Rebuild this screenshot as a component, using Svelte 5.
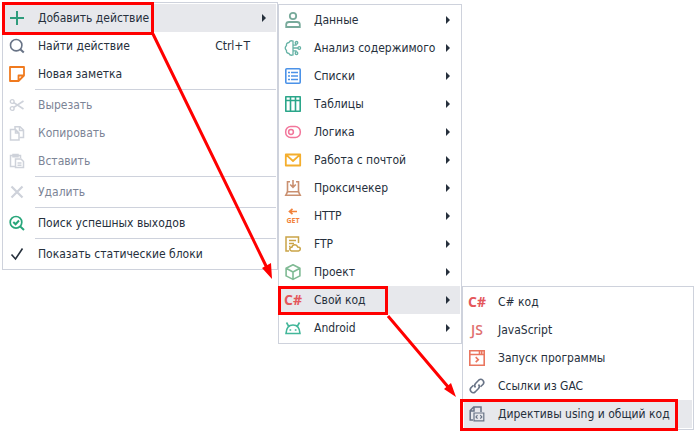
<script lang="ts">
  type Item = {
    icon: string;
    label: string;
    shortcut?: string;
    arrow?: boolean;
    active?: boolean;
    disabled?: boolean;
    line?: boolean;
  };

  const actions: Item[] = [
    { icon: 'plus', label: 'Добавить действие', arrow: true, active: true },
    { icon: 'search', label: 'Найти действие', shortcut: 'Ctrl+T' },
    { icon: 'note', label: 'Новая заметка', line: true },
    { icon: 'cut', label: 'Вырезать', disabled: true },
    { icon: 'copy', label: 'Копировать', disabled: true },
    { icon: 'paste', label: 'Вставить', disabled: true, line: true },
    { icon: 'remove', label: 'Удалить', disabled: true, line: true },
    { icon: 'exits', label: 'Поиск успешных выходов', line: true },
    { icon: 'check', label: 'Показать статические блоки' }
  ];

  const groups: Item[] = [
    { icon: 'user', label: 'Данные', arrow: true },
    { icon: 'brain', label: 'Анализ содержимого', arrow: true },
    { icon: 'list', label: 'Списки', arrow: true },
    { icon: 'table', label: 'Таблицы', arrow: true },
    { icon: 'toggle', label: 'Логика', arrow: true },
    { icon: 'mail', label: 'Работа с почтой', arrow: true },
    { icon: 'proxy', label: 'Проксичекер', arrow: true },
    { icon: 'http', label: 'HTTP', arrow: true },
    { icon: 'ftp', label: 'FTP', arrow: true },
    { icon: 'cube', label: 'Проект', arrow: true },
    { icon: 'csharp', label: 'Свой код', arrow: true, active: true },
    { icon: 'android', label: 'Android', arrow: true }
  ];

  const code: Item[] = [
    { icon: 'csharp', label: 'C# код' },
    { icon: 'js', label: 'JavaScript' },
    { icon: 'run', label: 'Запуск программы' },
    { icon: 'link', label: 'Ссылки из GAC' },
    { icon: 'using', label: 'Директивы using и общий код', active: true }
  ];
</script>

{#snippet icon(name: string)}
  <svg class="icon" viewBox="0 0 16 16" aria-hidden="true">
    {#if name === 'plus'}
      <path d="M8 1v14M1 8h14" stroke="#2f9c7c" stroke-width="2" />
    {:else if name === 'search'}
      <g stroke="#687386" stroke-width="1.6">
        <circle cx="7.2" cy="7.2" r="5.7" />
        <path d="M11.2 11.2l3.6 3.4" stroke-width="2" />
      </g>
    {:else if name === 'note'}
      <path d="M1 1h14v8.5L9.5 15H1zM15 9.5H9.5V15" stroke="#f07a1e" stroke-width="1.8" stroke-linejoin="round" />
    {:else if name === 'cut'}
      <g stroke="#ced2da" stroke-width="1.4">
        <circle cx="3.2" cy="4.5" r="1.9" />
        <circle cx="3.2" cy="11.5" r="1.9" />
        <path d="M4.8 5.6L14.5 12M4.8 10.4L14.5 4" stroke-width="1.7" />
      </g>
    {:else if name === 'copy'}
      <g stroke="#ced2da" stroke-width="1.5">
        <path d="M6 4V1.8h5L14.5 5v7.5h-4M10.5 2v3.5H14" />
        <path d="M1.5 4.5h5L10 8v7H1.5zM6.5 4.500V8H10" />
      </g>
    {:else if name === 'paste'}
      <g stroke="#ced2da" stroke-width="1.5">
        <path d="M6 13.5H1.500v-11h10V5M4 3.800h5V1.500H4z" />
        <path d="M6.500 6H12l2.500 2.500v6h-8zM8.500 10h4M8.500 12.300h4" />
      </g>
    {:else if name === 'remove'}
      <path d="M2.500 2.500l11 11M13.500 2.500l-11 11" stroke="#ced2da" stroke-width="2.2" />
    {:else if name === 'exits'}
      <g stroke="#27a67a" stroke-width="1.7">
        <circle cx="7" cy="7.3" r="5.8" />
        <path d="M4.300 7l2.300 2.200L10 5.500M11 11.300l4 3.700" stroke-width="2" />
      </g>
    {:else if name === 'check'}
      <path d="M2.500 8.500l4 4.500L13.500 2.500" stroke="#26303c" stroke-width="1.6" />
    {:else if name === 'user'}
      <g stroke="#78aa9b" stroke-width="1.8">
        <circle cx="8" cy="4" r="3.2" />
        <path d="M1.200 15v-2.500Q1.200 10 4 10h8q2.800 0 2.800 2.500V15z" />
      </g>
    {:else if name === 'brain'}
      <g stroke="#65b2a5" stroke-width="1.3">
        <path d="M8 1Q5 0 4 2.500 1 3 1.500 5.500q-2.500 2.500 0 5-.5 2.500 2.500 3 1 2.500 4 1.500z" />
        <path d="M8 8h5M8 5.200h3V4M8 10.800h3V12" />
        <circle cx="11.5" cy="2.8" r="1.3" />
        <circle cx="14.3" cy="8" r="1.3" />
        <circle cx="11.5" cy="13.2" r="1.3" />
      </g>
    {:else if name === 'list'}
      <g stroke="#4b92e8" stroke-width="1.6">
        <rect x=".8" y=".8" width="14.4" height="14.4" rx="1" />
        <path d="M3 4.500h2M6 4.500h7M3 8h2M6 8h7M3 11.500h2M6 11.500h7" />
      </g>
    {:else if name === 'table'}
      <path d="M.8 .8h14.400v14.400H.8zM.8 4.500h14.400M5.500 1v14M10.500 1v14" stroke="#2ba68a" stroke-width="1.6" stroke-linejoin="round" />
    {:else if name === 'toggle'}
      <g stroke="#f2769b" stroke-width="1.5">
        <rect x=".7" y="2.5" width="14.6" height="11" rx="5" />
        <circle cx="6" cy="8" r="2.4" />
      </g>
    {:else if name === 'mail'}
      <path d="M.8 2.500h14.400v11H.8zM1.500 3.200L8 9l6.500-5.800" stroke="#f4ae2d" stroke-width="1.8" stroke-linejoin="round" />
    {:else if name === 'proxy'}
      <g stroke="#ca9070" stroke-width="1.6">
        <path d="M5 1.800H2.500v10h11v-10H11M8 0v7M5.200 4.500L8 7.300l2.800-2.800" />
        <path d="M2.500 11.800L.8 15.200h14.400l-1.700-3.400" />
      </g>
    {:else if name === 'http'}
      <path d="M4.500 3.500H12M7.500 .8L4.500 3.500l3 2.700" stroke="#f2823b" stroke-width="1.7" />
      <text class="get" x="8" y="15">GET</text>
    {:else if name === 'ftp'}
      <g stroke="#caa447" stroke-width="1.5">
        <path d="M4 15H1V1h12.500v6M4 4.500h7M4 7.500h5M4 10.500h1.500" />
        <path d="M6.500 15q-1.700-.3-1.700-1.900 0-1.700 2-1.800.6-2.500 3.100-2.500 2.100 0 2.800 2.200 2.600 0 2.600 2.100 0 1.600-1.700 1.900z" />
      </g>
    {:else if name === 'cube'}
      <path d="M8 .8l6.900 3.500v7.600L8 15.400 1.100 11.900V4.300zM1.100 4.300L8 8l6.900-3.700M8 8v7.300" stroke="#7fba94" stroke-width="1.6" stroke-linejoin="round" />
    {:else if name === 'csharp'}
      <text class="lang" x="8" y="13">C#</text>
    {:else if name === 'js'}
      <text class="lang js" x="8" y="13">JS</text>
    {:else if name === 'android'}
      <g stroke="#43b79a" stroke-width="1.6">
        <path d="M1 13.500Q1.500 5 8 5t7 8.500zM3.800 6.500L1.500 2.500M12.200 6.500l2.300-4" />
        <path d="M4.500 10h1.700M9.800 10h1.700" stroke-width="1.7" />
      </g>
    {:else if name === 'run'}
      <path d="M.8 .8h14.400v14.400H.8zM.8 4.500h14.400M10.500 1v3.500M12.700 1v3.500M6.700 7.200l2.600 2.500-2.600 2.500" stroke="#ea765f" stroke-width="1.6" />
    {:else if name === 'link'}
      <g stroke="#687386" stroke-width="1.6">
        <path d="M6.500 9.500a3 3 0 0 1 0-4L9.900 2a3 3 0 0 1 4.200 4.200L11.500 8.800" />
        <path d="M9.500 6.500a3 3 0 0 1 0 4L6.100 14a3 3 0 0 1-4.200-4.200L4.500 7.200" />
      </g>
    {:else if name === 'using'}
      <g stroke="#687386" stroke-width="1.5">
        <path d="M4 14H1.200V4.500L4.700 1H12v5M1.500 5H5V1.500" />
        <path d="M5 7h9.800v7.800H5zM8.500 9.200L7 10.900l1.500 1.700M11.300 9.200l1.500 1.700-1.500 1.700" stroke-width="1.2" />
      </g>
    {/if}
  </svg>
{/snippet}

{#snippet menu(items: Item[], kind: string)}
  <div class="menu {kind}" role="menu">
    {#each items as item}
      <button class="item" class:active={item.active} role="menuitem" disabled={item.disabled}>
        {@render icon(item.icon)}
        <span class="label">{item.label}</span>
        {#if item.shortcut}<span class="shortcut">{item.shortcut}</span>{/if}
        {#if item.arrow}<span class="arrow"></span>{/if}
      </button>
      {#if item.line}<hr />{/if}
    {/each}
  </div>
{/snippet}

<main>
  {@render menu(actions, 'actions')}
  {@render menu(groups, 'groups')}
  {@render menu(code, 'code')}

  <svg class="marks" width="696" height="434" aria-hidden="true">
    <rect x="3.5" y="3.5" width="149" height="30" />
    <rect x="279.5" y="287.5" width="107" height="26" />
    <rect x="461.5" y="400.5" width="215" height="29" />
    <path d="M153 34L267 268M388 316L449 388" />
    <path class="head" d="M272 279l-10-11 9-5zM456 397l-12-8 7-6z" />
  </svg>
</main>

<style>
  :global(body) {
    background: #fff;
  }

  main {
    position: relative;
    display: flex;
    align-items: flex-start;
    padding: 2px;
    font-family: 'DejaVu Sans Condensed', 'Noto Sans', sans-serif;
    font-size: 12px;
    line-height: 16px;
    color: #26303c;
  }

  .menu {
    box-sizing: border-box;
    flex: none;
    padding: 1px;
    border: 1px solid #ced2dc;
    background: #fff;
  }

  .actions {
    width: 276px;
  }

  .groups {
    width: 184px;
    margin-top: 2px;
  }

  .code {
    width: 232px;
    margin-top: 284px;
  }

  .item {
    display: flex;
    align-items: center;
    width: 100%;
    height: 28px;
    padding: 0 10px 0 5px;
    border: 0;
    background: none;
    color: inherit;
    font: inherit;
    text-align: left;
    white-space: nowrap;
  }

  .item.active {
    background: #e7e8ec;
  }

  .item:disabled {
    color: #7c8496;
  }

  .icon {
    flex: none;
    width: 16px;
    height: 16px;
    margin-right: 13px;
    fill: none;
    overflow: visible;
  }

  .label {
    flex: 1;
  }

  .shortcut {
    margin-right: 16px;
  }

  .arrow {
    border: 4px solid transparent;
    border-left-color: #26303c;
    border-right-width: 0;
  }

  .lang {
    fill: #e4575b;
    font-family: 'Open Sans', sans-serif;
    font-size: 14px;
    font-weight: 700;
    text-anchor: middle;
  }

  .js {
    font-weight: 600;
    fill: #e0706f;
  }

  .get {
    fill: #f2823b;
    font-family: 'Open Sans', sans-serif;
    font-size: 7px;
    font-weight: 700;
    text-anchor: middle;
  }

  hr {
    height: 1px;
    margin: 1px 0 1px 31px;
    border: 0;
    background: #ced2dc;
  }

  .marks {
    position: absolute;
    top: 0;
    left: 0;
    fill: none;
    stroke: #f00;
    stroke-width: 3;
    pointer-events: none;
  }

  .marks .head {
    fill: #f00;
    stroke: none;
  }
</style>
